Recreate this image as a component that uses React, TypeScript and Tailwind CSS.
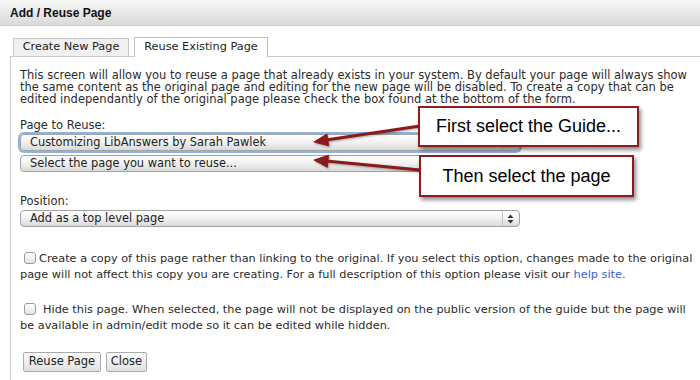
import React from "react"

// Small mac-style checkbox
const Check = ({ gap }: { gap: string }) => (
  <span
    className={`inline-block align-[-2px] ml-[4px] ${gap} w-[12px] h-[12px] rounded-[3px] border border-[#9c9c9c] bg-gradient-to-b from-white to-[#e2e2e2] shadow-[inset_0_1px_0_#fff]`} />
)

// Select box, drawn the way the browser paints it
const SelectBox = ({ label, focus }: { label: string, focus?: boolean }) => (
  <div
    className={`relative w-[500px] h-[17px] rounded-[4px] border border-[#a3a3a3] bg-gradient-to-b from-white via-[#f1f1f1] to-[#d9d9d9] flex items-center pl-[9px] text-[11.4px] text-[#222] leading-none ${focus ? 'shadow-[0_0_0_2px_#8cb2e6]' : ''}`}>
    <span>{label}</span>
    <span className="absolute right-[16px] top-0 bottom-0 border-l border-[#c4c4c4]" />
    <svg className="absolute right-[5px] top-[3px]" width="7" height="10" viewBox="0 0 7 10">
      <path d="M3.5 0.5 L6.5 4 L0.5 4 Z" fill="#333" />
      <path d="M3.5 9.5 L6.5 6 L0.5 6 Z" fill="#333" />
    </svg>
  </div>
)

const Button = ({ label, width }: { label: string, width: string }) => (
  <button
    type="button"
    className={`${width} h-[20px] border border-[#aaaaaa] rounded-[2px] bg-gradient-to-b from-[#fbfbfb] to-[#e1e1e1] text-[11.5px] text-[#222] leading-none`}>
    {label}
  </button>
)

const Callout = ({ text, pos }: { text: string, pos: string }) => (
  <div
    className={`absolute ${pos} border-2 border-[#8e1c1c] bg-white shadow-[2px_3px_4px_rgba(0,0,0,0.45)] flex items-center justify-center text-[18px] text-black font-['Liberation_Sans',Arial,sans-serif]`}>
    {text}
  </div>
)

const Line = ({ children }: { children: React.ReactNode }) => (
  <span className="block whitespace-nowrap">{children}</span>
)

export default function App() {
  return (
    <div className="relative w-[700px] h-[380px] overflow-hidden bg-white text-[#2b2b2b] font-['DejaVu_Sans',Verdana,sans-serif]">
      {/* Title bar */}
      <div className="h-[26px] px-[10px] flex items-center bg-gradient-to-b from-[#f7f7f7] to-[#dadada] border-b border-[#c9c9c9] font-['Liberation_Sans',Arial,sans-serif] font-bold text-[12px] text-[#111]">
        Add / Reuse Page
      </div>

      {/* Tabs */}
      <div className="flex items-end gap-[5px] pl-[13px] mt-[11px] h-[19px]">
        <div className="w-[116px] h-[18px] bg-[#f0f0f0] border border-b-0 border-[#c9c9c9] flex items-center justify-center text-[11.3px] text-[#222]">
          Create New Page
        </div>
        <div className="relative z-10 w-[134px] h-[20px] -mb-px bg-white border border-b-0 border-[#c0c0c0] flex items-center justify-center text-[11.3px] text-[#222]">
          Reuse Existing Page
        </div>
      </div>

      {/* Panel */}
      <div className="ml-[10px] border-t border-l border-[#c9c9c9] pl-[9px] pt-[12px] h-[400px] text-[11.5px]">
        <p className="leading-[12px]">
          <Line>This screen will allow you to reuse a page that already exists in your system. By default your page will always show</Line>
          <Line>the same content as the original page and editing for the new page will be disabled. To create a copy that can be</Line>
          <Line>edited independantly of the original page please check the box found at the bottom of the form.</Line>
        </p>

        <div className="mt-[14px] leading-[12px]">Page to Reuse:</div>
        <div className="mt-[3px]">
          <SelectBox label="Customizing LibAnswers by Sarah Pawlek" focus={true} />
        </div>
        <div className="mt-[4px]">
          <SelectBox label="Select the page you want to reuse..." />
        </div>

        <div className="mt-[23px] leading-[12px]">Position:</div>
        <div className="mt-[3px]">
          <SelectBox label="Add as a top level page" />
        </div>

        <p className="mt-[24px] leading-[16px] text-[11.3px]">
          <Line><Check gap="mr-[3px]" />Create a copy of this page rather than linking to the original. If you select this option, changes made to the original</Line>
          <Line>page will not affect this copy you are creating. For a full description of this option please visit our <span className="text-[#3a5fd9]">help site</span>.</Line>
        </p>

        <p className="mt-[19px] leading-[16px] text-[11.3px]">
          <Line><Check gap="mr-[7px]" />Hide this page. When selected, the page will not be displayed on the public version of the guide but the page will</Line>
          <Line>be available in admin/edit mode so it can be edited while hidden.</Line>
        </p>

        <div className="mt-[18px] flex gap-[5px] pl-[3px]">
          <Button label="Reuse Page" width="w-[78px]" />
          <Button label="Close" width="w-[41px]" />
        </div>
      </div>

      {/* Annotation arrows */}
      <svg className="absolute inset-0 pointer-events-none" width="700" height="380" viewBox="0 0 700 380">
        <g fill="#8b1a1a" stroke="#8b1a1a" style={{ filter: 'drop-shadow(1px 1px 1px rgba(0,0,0,0.35))' }}>
          <line x1="420" y1="126" x2="326" y2="140" strokeWidth="3" />
          <polygon points="314,142 328.7,145.8 326.9,134" strokeWidth="1" />
          <line x1="420" y1="170" x2="326" y2="161" strokeWidth="3" />
          <polygon points="314,160 327.3,167.3 328.5,155.3" strokeWidth="1" />
        </g>
      </svg>

      <Callout text="First select the Guide..." pos="left-[418px] top-[106px] w-[221px] h-[41px]" />
      <Callout text="Then select the page" pos="left-[419px] top-[155px] w-[215px] h-[42px]" />
    </div>
  )
}
